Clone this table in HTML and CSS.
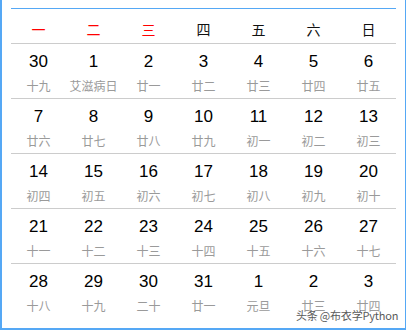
FILE: index.html
```html
<!DOCTYPE html>
<html lang="zh">
<head>
<meta charset="utf-8">
<link rel="stylesheet" href="styles.css">
</head>
<body>
<div class="frame">
  <div class="cal">
    <div class="head">
      <div class="wd red">一</div>
      <div class="wd red">二</div>
      <div class="wd red">三</div>
      <div class="wd">四</div>
      <div class="wd">五</div>
      <div class="wd">六</div>
      <div class="wd">日</div>
    </div>
    <div class="week">
      <div class="day"><span class="num">30</span><span class="lunar">十九</span></div>
      <div class="day"><span class="num">1</span><span class="lunar">艾滋病日</span></div>
      <div class="day"><span class="num">2</span><span class="lunar">廿一</span></div>
      <div class="day"><span class="num">3</span><span class="lunar">廿二</span></div>
      <div class="day"><span class="num">4</span><span class="lunar">廿三</span></div>
      <div class="day"><span class="num">5</span><span class="lunar">廿四</span></div>
      <div class="day"><span class="num">6</span><span class="lunar">廿五</span></div>
    </div>
    <div class="week">
      <div class="day"><span class="num">7</span><span class="lunar">廿六</span></div>
      <div class="day"><span class="num">8</span><span class="lunar">廿七</span></div>
      <div class="day"><span class="num">9</span><span class="lunar">廿八</span></div>
      <div class="day"><span class="num">10</span><span class="lunar">廿九</span></div>
      <div class="day"><span class="num">11</span><span class="lunar">初一</span></div>
      <div class="day"><span class="num">12</span><span class="lunar">初二</span></div>
      <div class="day"><span class="num">13</span><span class="lunar">初三</span></div>
    </div>
    <div class="week">
      <div class="day"><span class="num">14</span><span class="lunar">初四</span></div>
      <div class="day"><span class="num">15</span><span class="lunar">初五</span></div>
      <div class="day"><span class="num">16</span><span class="lunar">初六</span></div>
      <div class="day"><span class="num">17</span><span class="lunar">初七</span></div>
      <div class="day"><span class="num">18</span><span class="lunar">初八</span></div>
      <div class="day"><span class="num">19</span><span class="lunar">初九</span></div>
      <div class="day"><span class="num">20</span><span class="lunar">初十</span></div>
    </div>
    <div class="week">
      <div class="day"><span class="num">21</span><span class="lunar">十一</span></div>
      <div class="day"><span class="num">22</span><span class="lunar">十二</span></div>
      <div class="day"><span class="num">23</span><span class="lunar">十三</span></div>
      <div class="day"><span class="num">24</span><span class="lunar">十四</span></div>
      <div class="day"><span class="num">25</span><span class="lunar">十五</span></div>
      <div class="day"><span class="num">26</span><span class="lunar">十六</span></div>
      <div class="day"><span class="num">27</span><span class="lunar">十七</span></div>
    </div>
    <div class="week last">
      <div class="day"><span class="num">28</span><span class="lunar">十八</span></div>
      <div class="day"><span class="num">29</span><span class="lunar">十九</span></div>
      <div class="day"><span class="num">30</span><span class="lunar">二十</span></div>
      <div class="day"><span class="num">31</span><span class="lunar">廿一</span></div>
      <div class="day"><span class="num">1</span><span class="lunar">元旦</span></div>
      <div class="day"><span class="num">2</span><span class="lunar">廿三</span></div>
      <div class="day"><span class="num">3</span><span class="lunar">廿四</span></div>
    </div>
  </div>
  <div class="watermark">头条 @布衣学Python</div>
</div>
</body>
</html>
```

FILE: styles.css
```css
html, body {
  margin: 0;
  padding: 0;
  background: #ffffff;
}

.frame {
  position: relative;
  box-sizing: border-box;
  width: 406px;
  height: 330px;
  border-left: 2px solid #55a8f5;
  border-right: 1px solid #55a8f5;
  border-bottom: 2px solid #55a8f5;
  padding: 8px 0 0 9px;
  font-family: "Liberation Sans", "Noto Sans CJK SC", sans-serif;
}

.cal {
  width: 385px;
  border-top: 1px solid #55a8f5;
}

.head,
.week {
  display: grid;
  grid-template-columns: repeat(7, 55px);
  border-bottom: 1px solid #cccccc;
}

.week.last {
  border-bottom: none;
}

.head {
  height: 34px;
}

.wd {
  padding-top: 12px;
  line-height: 17px;
  text-align: center;
  font-family: "Noto Sans CJK SC", sans-serif;
  font-size: 14px;
  color: #111111;
}

.wd.red {
  color: #ff0000;
}

.week {
  height: 54px;
}

.day {
  display: flex;
  flex-direction: column;
  align-items: center;
  padding-top: 8px;
}

.num {
  font-family: "Liberation Sans", sans-serif;
  font-size: 17px;
  line-height: 20px;
  color: #000000;
}

.lunar {
  margin-top: 6px;
  font-family: "Noto Sans CJK SC", sans-serif;
  font-size: 12px;
  line-height: 16px;
  color: #9a9a9a;
  white-space: nowrap;
}

.watermark {
  position: absolute;
  left: 294px;
  top: 307px;
  font-family: "Noto Sans CJK SC", sans-serif;
  font-size: 11px;
  line-height: 16px;
  letter-spacing: -0.2px;
  color: #5a5a5a;
  text-shadow: 0 0 2px #ffffff, 0 0 2px #ffffff;
  white-space: nowrap;
}
```
